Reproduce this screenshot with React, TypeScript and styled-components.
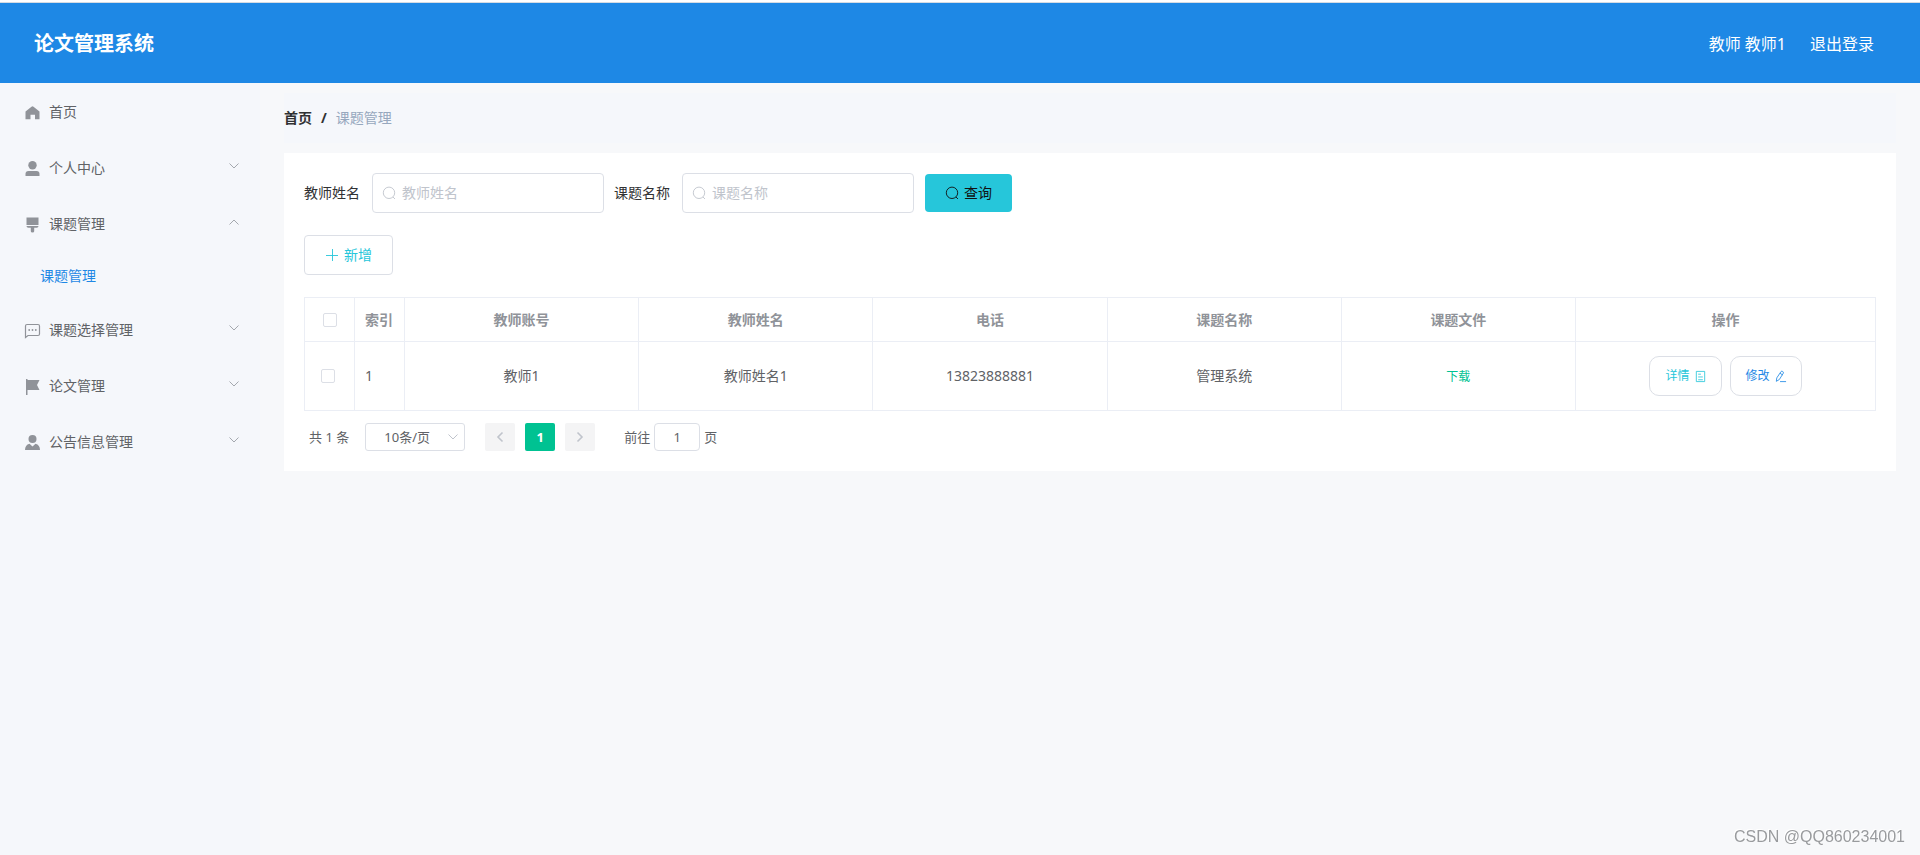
import React from "react";
import styled, { createGlobalStyle } from "styled-components";

const GlobalStyle = createGlobalStyle`
  *, *::before, *::after { box-sizing: border-box; }
  body {
    margin: 0;
    background: #fff;
    color: #303133;
    font: 14px/20px "Noto Sans", "Noto Sans CJK SC", sans-serif;
  }
  button, input, select { font: inherit; color: inherit; margin: 0; }
  button { cursor: pointer; }
  a { color: inherit; text-decoration: none; }
`;

const Page = styled.div`
  display: flex;
  flex-direction: column;
  min-height: 100vh;
  padding-top: 2px;
`;

const Header = styled.header`
  display: flex;
  align-items: center;
  justify-content: space-between;
  height: 81px;
  padding: 2px 46px 0 34px;
  border-top: 1px solid #d5dbe3;
  background: #1e88e5;
  color: #fff;
`;

const Title = styled.h1`
  margin: 0;
  font-size: 20px;
  line-height: 28px;
`;

const Account = styled.div`
  display: flex;
  gap: 24px;
  font-size: 16px;
  line-height: 22px;
`;

const Body = styled.div`
  display: flex;
  flex: 1;
`;

const Sidebar = styled.nav`
  flex: 0 0 260px;
  background: #f5f7fb;
`;

const MenuItem = styled.a`
  display: flex;
  align-items: center;
  gap: 8px;
  height: 56px;
  padding: 2px 20px 0 24px;
  color: #606266;
`;

const MenuIcon = styled.svg`
  width: 17px;
  height: 17px;
  fill: #909399;
`;

const MenuLabel = styled.span`
  flex: 1;
`;

const Chevron = styled.svg<{ $up?: boolean }>`
  width: 12px;
  height: 12px;
  fill: none;
  stroke: #a4a8ae;
  transform: ${(p) => (p.$up ? "rotate(180deg)" : "none")};
`;

const MenuArrow = styled(Chevron)`
  margin-bottom: 4px;
`;

const SubItem = styled.a`
  display: flex;
  align-items: center;
  height: 50px;
  padding-left: 40px;
  color: #1e88e5;
`;

const Main = styled.main`
  flex: 1;
  min-width: 0;
  padding: 10px 24px;
  background: #f7f8fa;
`;

const Breadcrumb = styled.nav`
  display: flex;
  align-items: center;
  gap: 9px;
  height: 50px;
  margin-bottom: 10px;
  background: #f5f7fb;
  font-weight: 700;
`;

const Current = styled.span`
  color: #97a8be;
  font-weight: 400;
`;

const Card = styled.section`
  padding: 20px;
  background: #fff;
`;

const SearchForm = styled.form`
  display: flex;
  align-items: center;
  gap: 10px;
  margin-bottom: 22px;
`;

const Field = styled.label`
  display: flex;
  align-items: center;
  gap: 12px;
`;

const InputBox = styled.span`
  display: flex;
  align-items: center;
  gap: 6px;
  width: 232px;
  height: 40px;
  padding: 0 9px;
  border: 1px solid #dcdfe6;
  border-radius: 4px;
  color: #c0c4cc;
`;

const TextInput = styled.input`
  flex: 1;
  min-width: 0;
  padding: 0;
  border: 0;
  outline: 0;
  background: none;
  color: #606266;
  &::placeholder { color: #c0c4cc; opacity: 1; }
`;

const LineIcon = styled.svg<{ $size: number }>`
  width: ${(p) => p.$size}px;
  height: ${(p) => p.$size}px;
  fill: none;
  stroke: currentColor;
`;

const SearchButton = styled.button`
  display: flex;
  align-items: center;
  gap: 5px;
  height: 38px;
  margin-left: 1px;
  padding: 0 20px;
  border: 0;
  border-radius: 4px;
  background: #26c6da;
  color: #111;
`;

const AddButton = styled.button`
  display: flex;
  align-items: center;
  gap: 5px;
  height: 40px;
  margin-bottom: 22px;
  padding: 0 20px;
  border: 1px solid #dcdfe6;
  border-radius: 4px;
  background: #fff;
  color: #26c6da;
`;

const Table = styled.table`
  width: 100%;
  table-layout: fixed;
  border-collapse: collapse;
  color: #606266;
`;

const Col = styled.col<{ $width?: number }>`
  width: ${(p) => (p.$width ? `${p.$width}px` : "auto")};
`;

const HeadRow = styled.tr`
  height: 44px;
  color: #909399;
`;

const Row = styled.tr`
  height: 69px;
`;

const Th = styled.th<{ $left?: boolean }>`
  padding: 0 10px;
  border: 1px solid #ebeef5;
  text-align: ${(p) => (p.$left ? "left" : "center")};
`;

const Td = styled.td<{ $left?: boolean }>`
  padding: 0 10px;
  border: 1px solid #ebeef5;
  text-align: ${(p) => (p.$left ? "left" : "center")};
`;

const CheckTd = styled(Td)`
  padding: 0 14px 0 10px;
`;

const Checkbox = styled.input`
  display: block;
  appearance: none;
  width: 14px;
  height: 14px;
  margin: 0 auto;
  border: 1px solid #dcdfe6;
  border-radius: 2px;
  background: #fff;
`;

const Download = styled.a`
  color: #00c292;
  font-size: 12px;
`;

const Actions = styled.div`
  display: flex;
  justify-content: center;
  gap: 8px;
`;

const ActionButton = styled.button<{ $color: string }>`
  display: flex;
  align-items: center;
  gap: 4px;
  height: 40px;
  padding: 0 14px 0 15px;
  border: 1px solid #dcdfe6;
  border-radius: 10px;
  background: #fff;
  color: ${(p) => p.$color};
  font-size: 12px;
`;

const Pagination = styled.div`
  display: flex;
  align-items: center;
  height: 28px;
  margin-top: 12px;
  padding-left: 5px;
  color: #606266;
  font-size: 13px;
`;

const SizePicker = styled.span`
  position: relative;
  margin: 0 20px 0 16px;
`;

const SizeSelect = styled.select`
  display: block;
  appearance: none;
  width: 100px;
  height: 28px;
  padding: 0 30px 0 14px;
  border: 1px solid #dcdfe6;
  border-radius: 3px;
  background: #fff;
  text-align-last: center;
`;

const SelectArrow = styled(Chevron)`
  position: absolute;
  top: 8px;
  right: 6px;
  stroke: #c0c4cc;
  pointer-events: none;
`;

const Pager = styled.div`
  display: flex;
  gap: 10px;
  margin-right: 29px;
`;

const PageButton = styled.button<{ $active?: boolean }>`
  display: flex;
  align-items: center;
  justify-content: center;
  width: 30px;
  height: 28px;
  padding: 0;
  border: 0;
  border-radius: 2px;
  background: ${(p) => (p.$active ? "#00c292" : "#f4f4f5")};
  color: ${(p) => (p.$active ? "#fff" : "#c0c4cc")};
  font-weight: 700;
`;

const Jumper = styled.label`
  display: flex;
  align-items: center;
  gap: 4px;
`;

const JumpInput = styled.input`
  width: 46px;
  height: 28px;
  padding: 0;
  border: 1px solid #dcdfe6;
  border-radius: 4px;
  background: #fff;
  text-align: center;
`;

const Watermark = styled.div`
  position: fixed;
  right: 15px;
  bottom: 8px;
  color: #999b9e;
  font: 16px/20px "Liberation Sans", sans-serif;
  text-shadow: -1px -1px 0 #fff;
`;

const MagnifierIcon = () => (
  <LineIcon $size={14} viewBox="0 0 14 14" strokeWidth="0.9" aria-hidden="true">
    <circle cx="7" cy="6.800" r="5.700" />
    <path d="M11 11l2 2" />
  </LineIcon>
);

const menu = [
  {
    label: "首页",
    icon: <path d="M8.500 2.300q.6 0 1 .4L15.500 7.600V15.300h-4.500V10.800H6.500v4.500H1.500V7.600L7.500 2.700q.4-.4 1-.4z" />,
  },
  {
    label: "个人中心",
    arrow: true,
    icon: (
      <>
        <circle cx="8.500" cy="5.200" r="4.200" />
        <path d="M1.500 16v-2q0-3 3-3h8q3 0 3 3v2z" />
      </>
    ),
  },
  {
    label: "课题管理",
    arrow: true,
    open: true,
    icon: <path d="M2.500 1.500h12v7.500h-12zM2.500 10h12q0 1.800-1.800 1.800H10.200v3.500q0 1.200-1.700 1.200t-1.700-1.200v-3.500H4.300Q2.500 11.800 2.500 10z" />,
    children: ["课题管理"],
  },
  {
    label: "课题选择管理",
    arrow: true,
    icon: (
      <>
        <path
          d="M1.500 15.500V4q0-1.500 1.500-1.500h11q1.500 0 1.500 1.500v8q0 1.500-1.500 1.500H4z"
          fill="none"
          stroke="#909399"
          strokeWidth="1.200"
        />
        <circle cx="5.200" cy="8" r="0.900" />
        <circle cx="8.500" cy="8" r="0.900" />
        <circle cx="11.800" cy="8" r="0.900" />
      </>
    ),
  },
  {
    label: "论文管理",
    arrow: true,
    icon: <path d="M2 1h1.500v1H15.500l-2.500 5 2.500 5H3.500v5H2z" />,
  },
  {
    label: "公告信息管理",
    arrow: true,
    icon: (
      <>
        <circle cx="8.500" cy="5" r="4" />
        <path d="M1 16q0-5 4.500-6.200L8.500 12.500l3-2.700Q16 11 16 16z" />
      </>
    ),
  },
];

const columns = ["教师账号", "教师姓名", "电话", "课题名称", "课题文件", "操作"];

export default function App() {
  return (
    <Page>
      <GlobalStyle />
      <Header>
        <Title>论文管理系统</Title>
        <Account>
          <span>教师 教师1</span>
          <a href="#logout">退出登录</a>
        </Account>
      </Header>
      <Body>
        <Sidebar>
          {menu.map((item) => (
            <React.Fragment key={item.label}>
              <MenuItem href="#menu">
                <MenuIcon viewBox="0 0 17 17" aria-hidden="true">{item.icon}</MenuIcon>
                <MenuLabel>{item.label}</MenuLabel>
                {item.arrow && (
                  <MenuArrow $up={item.open} viewBox="0 0 12 12" aria-hidden="true">
                    <path d="M1.500 3.500L6 8l4.500-4.500" />
                  </MenuArrow>
                )}
              </MenuItem>
              {item.children?.map((child) => (
                <SubItem href="#topics" key={child}>{child}</SubItem>
              ))}
            </React.Fragment>
          ))}
        </Sidebar>
        <Main>
          <Breadcrumb>
            <a href="#home">首页</a>
            <span>/</span>
            <Current>课题管理</Current>
          </Breadcrumb>
          <Card>
            <SearchForm onSubmit={(e) => e.preventDefault()}>
              {["教师姓名", "课题名称"].map((name) => (
                <Field key={name}>
                  {name}
                  <InputBox>
                    <MagnifierIcon />
                    <TextInput type="text" placeholder={name} />
                  </InputBox>
                </Field>
              ))}
              <SearchButton type="submit">
                <MagnifierIcon />
                查询
              </SearchButton>
            </SearchForm>
            <AddButton type="button">
              <LineIcon $size={14} viewBox="0 0 14 14" strokeWidth="0.9" aria-hidden="true">
                <path d="M7.500 1v12M1 7.500h12" />
              </LineIcon>
              新增
            </AddButton>
            <Table>
              <colgroup>
                <Col $width={50} />
                <Col $width={50} />
                <Col />
                <Col />
                <Col />
                <Col />
                <Col />
                <Col $width={300} />
              </colgroup>
              <thead>
                <HeadRow>
                  <Th><Checkbox type="checkbox" aria-label="全选" /></Th>
                  <Th $left>索引</Th>
                  {columns.map((c) => <Th key={c}>{c}</Th>)}
                </HeadRow>
              </thead>
              <tbody>
                <Row>
                  <CheckTd><Checkbox type="checkbox" aria-label="选择" /></CheckTd>
                  <Td $left>1</Td>
                  <Td>教师1</Td>
                  <Td>教师姓名1</Td>
                  <Td>13823888881</Td>
                  <Td>管理系统</Td>
                  <Td><Download href="#download">下载</Download></Td>
                  <Td>
                    <Actions>
                      <ActionButton type="button" $color="#26c6da">
                        详情
                        <LineIcon $size={13} viewBox="0 0 14 14" strokeWidth="0.9" aria-hidden="true">
                          <path d="M2.500 1.500h9v11h-9zM4.500 4.500h3M4.500 7.500h5M4.500 10.500h5" />
                        </LineIcon>
                      </ActionButton>
                      <ActionButton type="button" $color="#1e88e5">
                        修改
                        <LineIcon $size={13} viewBox="0 0 14 14" strokeWidth="0.9" aria-hidden="true">
                          <path d="M3 8.500L7.500 1.800q.8-.9 1.800-.3t.8 1.800L5.800 10.200l-3.300 2zM6.500 3.500l2.700 1.800M6.500 12.500h6.500" />
                        </LineIcon>
                      </ActionButton>
                    </Actions>
                  </Td>
                </Row>
              </tbody>
            </Table>
            <Pagination>
              <span>共 1 条</span>
              <SizePicker>
                <SizeSelect aria-label="每页条数" defaultValue="10">
                  <option value="10">10条/页</option>
                </SizeSelect>
                <SelectArrow viewBox="0 0 12 12" aria-hidden="true">
                  <path d="M1.500 3.500L6 8l4.500-4.500" />
                </SelectArrow>
              </SizePicker>
              <Pager>
                <PageButton type="button" aria-label="上一页">
                  <LineIcon $size={12} viewBox="0 0 12 12" strokeWidth="1.600" aria-hidden="true">
                    <path d="M8.500 1.500L4 6l4.500 4.500" />
                  </LineIcon>
                </PageButton>
                <PageButton type="button" $active>1</PageButton>
                <PageButton type="button" aria-label="下一页">
                  <LineIcon $size={12} viewBox="0 0 12 12" strokeWidth="1.600" aria-hidden="true">
                    <path d="M3.500 1.500L8 6l-4.500 4.500" />
                  </LineIcon>
                </PageButton>
              </Pager>
              <Jumper>
                前往
                <JumpInput type="text" defaultValue="1" />
                页
              </Jumper>
            </Pagination>
          </Card>
        </Main>
      </Body>
      <Watermark>CSDN @QQ860234001</Watermark>
    </Page>
  );
}
